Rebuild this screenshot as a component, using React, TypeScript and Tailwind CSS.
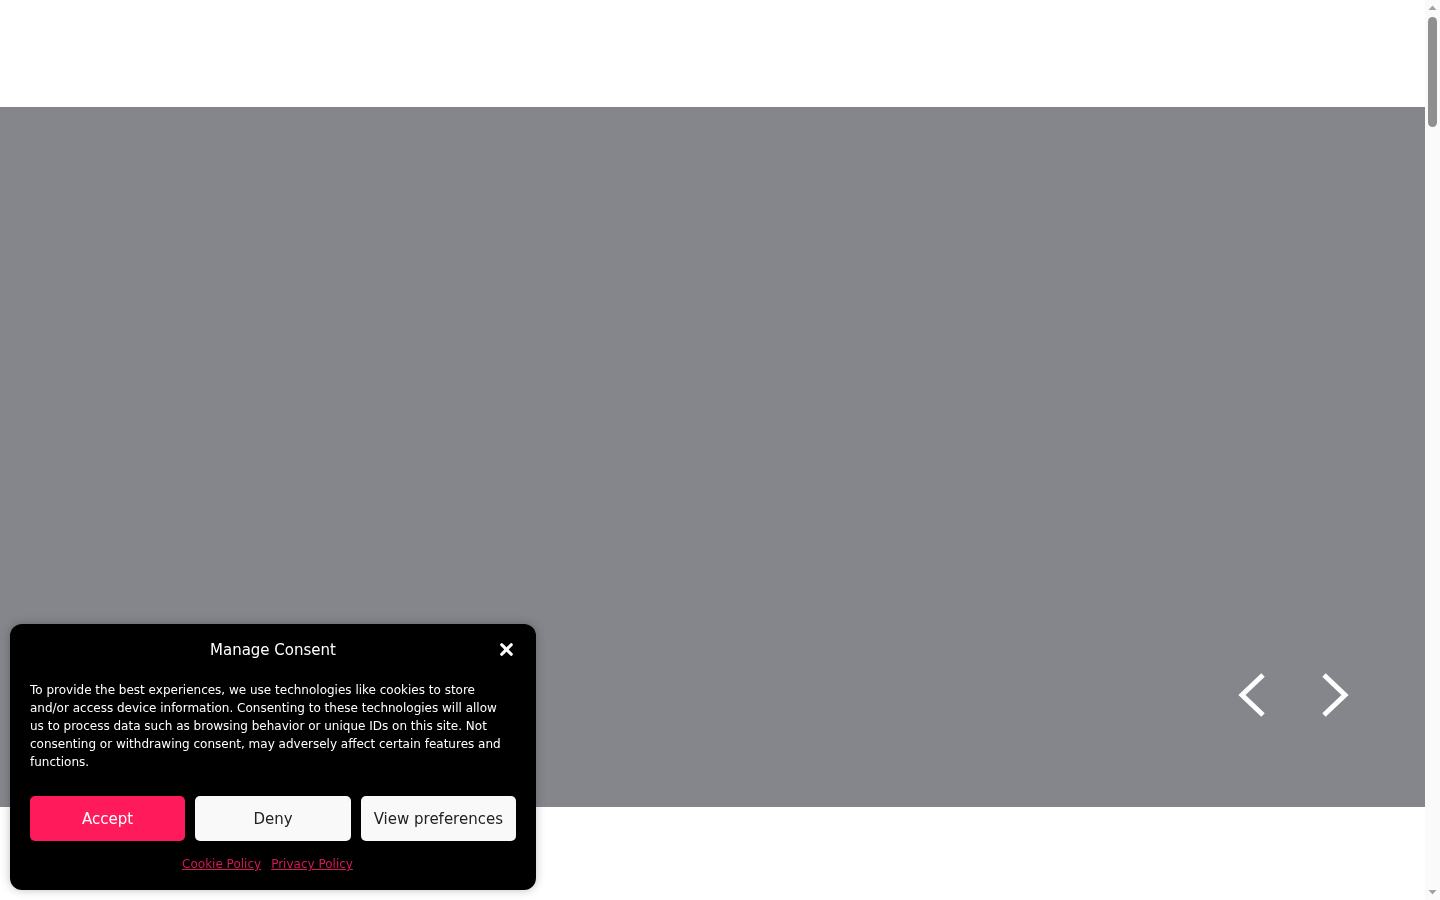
import { X } from "lucide-react";

function Chevron({ dir }: { dir: "left" | "right" }) {
  return (
    <svg width="30" height="44" viewBox="0 0 30 44" fill="none">
      <path
        d={dir === "left" ? "M26 2 L5 22 L26 42" : "M4 2 L25 22 L4 42"}
        stroke="#fff"
        strokeWidth="5"
        strokeLinecap="butt"
      />
    </svg>
  );
}

function Scrollbar() {
  return (
    <div className="w-[15px] h-full bg-[#fafafa] flex flex-col items-center">
      <svg width="15" height="15" viewBox="0 0 15 15" className="shrink-0">
        <path d="M3.5 10 L7.5 5.5 L11.5 10 Z" fill="#a3a3a3" />
      </svg>
      <div className="w-[9px] h-[110px] mt-[2px] rounded-full bg-[#8f8f8f] shrink-0" />
      <div className="flex-1" />
      <svg width="15" height="15" viewBox="0 0 15 15" className="shrink-0">
        <path d="M3.5 5 L7.5 9.5 L11.5 5 Z" fill="#a3a3a3" />
      </svg>
    </div>
  );
}

export default function App() {
  return (
    <div
      className="h-screen overflow-hidden bg-white flex"
      style={{ fontFamily: "'DejaVu Sans', sans-serif" }}
    >
      <div className="flex-1 flex flex-col">
        <header className="h-[107px] shrink-0 bg-white" />

        <section className="relative h-[700px] shrink-0 bg-[#85868b]">
          <div className="absolute left-[1237px] top-[566px] flex gap-[53px]">
            <button className="p-0">
              <Chevron dir="left" />
            </button>
            <button className="p-0">
              <Chevron dir="right" />
            </button>
          </div>
        </section>

        <main className="flex-1 bg-white" />
      </div>

      <Scrollbar />

      <div className="fixed left-[10px] top-[624px] w-[526px] h-[266px] rounded-xl bg-black text-white shadow-[0_0_10px_rgba(0,0,0,0.25)] flex flex-col px-5">
        <div className="relative flex items-center justify-center h-[50px] pt-[1px]">
          <h2 className="text-[15px] leading-5 font-normal">Manage Consent</h2>
          <button className="absolute right-0 top-[16px] text-white">
            <X className="w-[19px] h-[19px]" strokeWidth={4} />
          </button>
        </div>
        <p className="mt-[7px] pr-[10px] text-[12px] leading-[18px] text-white">
          To provide the best experiences, we use technologies like cookies to store and/or access device
          information. Consenting to these technologies will allow us to process data such as browsing
          behavior or unique IDs on this site. Not consenting or withdrawing consent, may adversely affect
          certain features and functions.
        </p>
        <div className="mt-[25px] grid grid-cols-3 gap-[10px]">
          <button className="h-[45px] rounded-[5px] bg-[#ff1a5c] text-white text-[15px] pt-[1px]">Accept</button>
          <button className="h-[45px] rounded-[5px] bg-[#f9f9f9] text-[#222] text-[15px] pt-[1px]">Deny</button>
          <button className="h-[45px] rounded-[5px] bg-[#f9f9f9] text-[#222] text-[15px] pt-[1px]">
            View preferences
          </button>
        </div>
        <div className="mt-[14px] pr-[11px] flex justify-center gap-[10px] text-[12px] leading-[18px]">
          <a href="#" className="text-[#d4175a] underline">Cookie Policy</a>
          <a href="#" className="text-[#d4175a] underline">Privacy Policy</a>
        </div>
      </div>
    </div>
  );
}
